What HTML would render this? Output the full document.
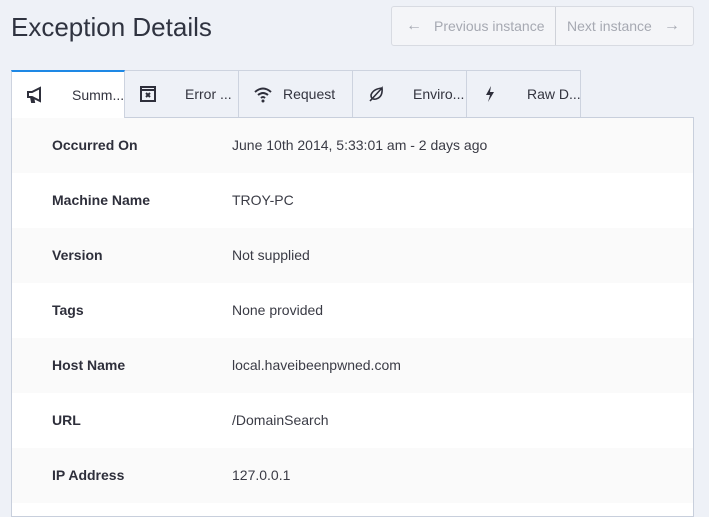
<!DOCTYPE html>
<html><head><style>
*{box-sizing:border-box;margin:0;padding:0}
body{width:709px;height:504px;overflow:hidden;background:#eef1f7;font-family:"Liberation Sans",sans-serif;color:#2e2f3b;position:relative}
h1{position:absolute;left:11px;top:12px;font-size:26px;font-weight:normal;color:#2f3340}
.btns{position:absolute;left:391px;top:6px;width:303px;height:40px;border:1px solid #d8dbe2;border-radius:3px;background:#f4f5f8;display:flex;font-size:14px;color:#a6a9b2}
.btns div{display:flex;align-items:center;height:100%}
.b1{width:164px;border-right:1px solid #cfd2d9;padding-left:14px}
.b2{flex:1;padding-left:11px}
.tabs{position:absolute;left:11px;top:70px;height:48px;display:flex}
.tab{width:114px;height:47px;border:1px solid #cdd3df;border-left:none;border-bottom:none;background:#eef1f7;display:flex;align-items:center;font-size:14px;color:#33343f;position:relative;white-space:nowrap}
.tab:first-child{border-left:1px solid #cdd3df}
.tab.act{background:#fff;border-top:2px solid #1e88e5;height:48px}
.tab svg{position:absolute;left:14px;top:14px}
.tab span{position:absolute;left:60px}
.panel{position:absolute;left:11px;top:117px;width:683px;height:400px;border:1px solid #c8cfdc;background:#fff}
.row{height:55px;display:flex;align-items:center;font-size:14px;padding-bottom:2px}
.row:nth-child(odd){background:#fafafa}
.l{width:220px;padding-left:40px;font-weight:bold;color:#2e2f3b}
.v{color:#3a3b45}
</style></head><body>
<h1>Exception Details</h1>
<div class="btns"><div class="b1"><span style="font-size:16px;margin-right:12px">&#8592;</span>Previous instance</div><div class="b2">Next instance<span style="font-size:16px;margin-left:12px">&#8594;</span></div></div>
<div class="panel">
<div class="row"><div class="l">Occurred On</div><div class="v">June 10th 2014, 5:33:01 am - 2 days ago</div></div>
<div class="row"><div class="l">Machine Name</div><div class="v">TROY-PC</div></div>
<div class="row"><div class="l">Version</div><div class="v">Not supplied</div></div>
<div class="row"><div class="l">Tags</div><div class="v">None provided</div></div>
<div class="row"><div class="l">Host Name</div><div class="v">local.haveibeenpwned.com</div></div>
<div class="row"><div class="l">URL</div><div class="v">/DomainSearch</div></div>
<div class="row"><div class="l">IP Address</div><div class="v">127.0.0.1</div></div>
</div>
<div class="tabs">
<div class="tab act"><svg width="18" height="18" viewBox="0 0 18 18"><path d="M2 6h4l8-4v13l-8-4H2z M5 11l1 5h2l-1-5" fill="none" stroke="#2e2f3b" stroke-width="2"/></svg><span>Summ...</span></div>
<div class="tab"><svg width="18" height="18" viewBox="0 0 18 18"><rect x="2" y="2" width="14" height="14" fill="none" stroke="#2e2f3b" stroke-width="2"/><path d="M2 5h14M7 8l4 4M11 8l-4 4" stroke="#2e2f3b" stroke-width="2"/></svg><span>Error ...</span></div>
<div class="tab"><svg width="20" height="18" viewBox="0 0 20 18"><path d="M2 7q8-7 16 0M5 10q5-4 10 0M8 13q2-2 4 0" fill="none" stroke="#2e2f3b" stroke-width="2"/><circle cx="10" cy="16" r="1.5" fill="#2e2f3b"/></svg><span style="left:44px">Request</span></div>
<div class="tab"><svg width="18" height="18" viewBox="0 0 18 18"><path d="M3 16L15 3Q16 12 9 14Q4 15 4 10Q6 4 15 3" fill="none" stroke="#2e2f3b" stroke-width="1.6"/></svg><span>Enviro...</span></div>
<div class="tab"><svg width="18" height="18" viewBox="0 0 18 18"><path d="M10 1L5 10h4l-2 7 6-10H9z" fill="#2e2f3b"/></svg><span>Raw D...</span></div>
</div>
</body></html>
